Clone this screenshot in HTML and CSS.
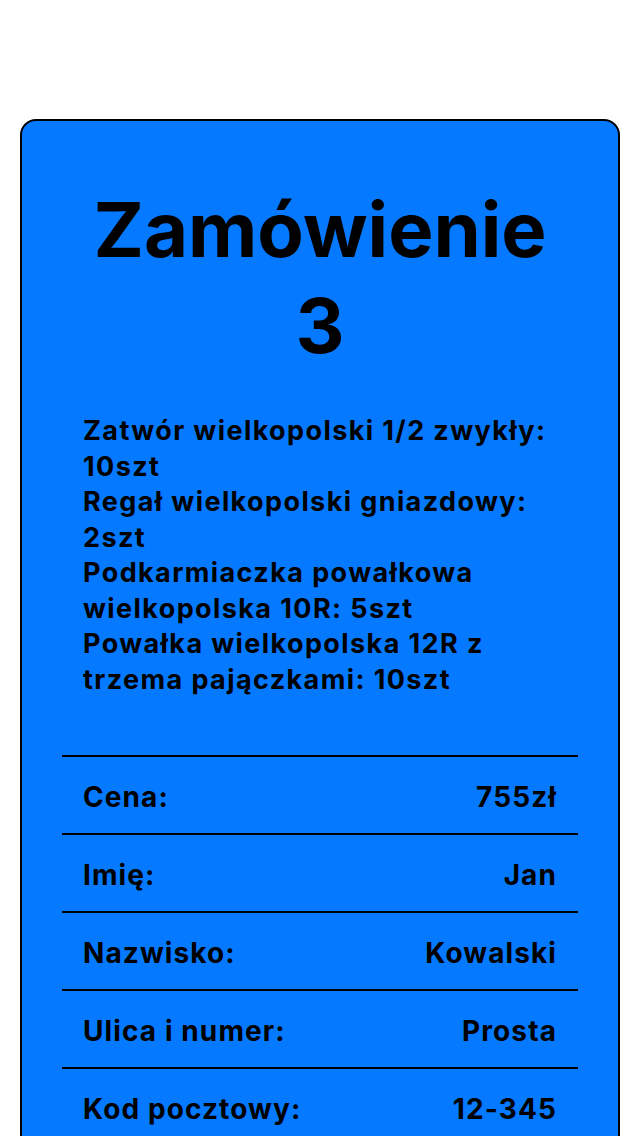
FILE: index.html
```html
<!DOCTYPE html>
<html lang="pl">
<head>
<meta charset="utf-8">
<title>Zamówienie 3</title>
<link rel="stylesheet" href="styles.css">
</head>
<body>
<main class="page">
  <section class="card">
    <h1 class="title">Zamówienie<br>3</h1>
    <div class="items">
      <div class="item">Zatwór wielkopolski 1/2 zwykły: 10szt</div>
      <div class="item">Regał wielkopolski gniazdowy: 2szt</div>
      <div class="item">Podkarmiaczka powałkowa wielkopolska 10R: 5szt</div>
      <div class="item">Powałka wielkopolska 12R z trzema pajączkami: 10szt</div>
    </div>
    <div class="details">
      <div class="row"><span class="label">Cena:</span><span class="value">755zł</span></div>
      <div class="row"><span class="label">Imię:</span><span class="value">Jan</span></div>
      <div class="row"><span class="label">Nazwisko:</span><span class="value">Kowalski</span></div>
      <div class="row"><span class="label">Ulica i numer:</span><span class="value">Prosta</span></div>
      <div class="row"><span class="label">Kod pocztowy:</span><span class="value">12-345</span></div>
    </div>
  </section>
</main>
</body>
</html>
```

FILE: styles.css
```css
html, body {
  margin: 0;
  padding: 0;
  background: #ffffff;
  overflow: hidden;
}

body {
  font-family: Inter, "Noto Sans", "Liberation Sans", sans-serif;
  color: #000000;
}

.page {
  padding: 119px 20px 0 20px;
  height: 1136px;
  box-sizing: border-box;
}

.card {
  background: #0579ff;
  border: 2px solid #000000;
  border-radius: 16px;
  padding: 60px 40px 40px 40px;
  min-height: 1100px;
}

.title {
  margin: 0;
  text-align: center;
  font-size: 76px;
  line-height: 96px;
  font-weight: 700;
}

.items {
  margin-top: 40px;
  padding: 0 21px;
  font-size: 27px;
  line-height: 35.5px;
  font-weight: 700;
  letter-spacing: 1.4px;
}

.details {
  margin-top: 58px;
  border-top: 2px solid #000000;
}

.row {
  display: flex;
  justify-content: space-between;
  align-items: center;
  height: 73px;
  padding: 3px 21px 0 21px;
  border-bottom: 2px solid #000000;
  font-size: 28px;
  font-weight: 700;
  letter-spacing: 1.1px;
}
```
